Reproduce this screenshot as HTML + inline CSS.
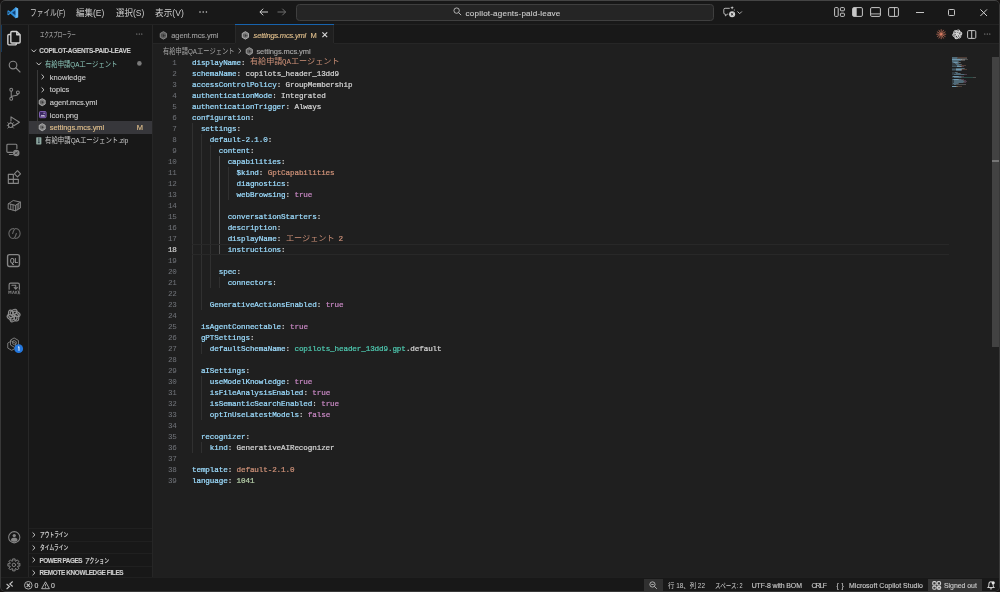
<!DOCTYPE html>
<html lang="ja"><head><meta charset="utf-8"><title>settings.mcs.yml - copilot-agents-paid-leave - Visual Studio Code</title>
<style>
html,body{margin:0;padding:0;}
body{width:1000px;height:592px;overflow:hidden;background:#171413;font-family:"Liberation Sans",sans-serif;}
#w{position:absolute;left:0;top:0;width:1000px;height:592px;background:#181818;border-radius:5px;overflow:hidden;will-change:transform;}
#w div,#w span.t,#w svg.j{position:absolute;}
.t{white-space:pre;}
.s{font-family:"Liberation Sans",sans-serif;-webkit-text-stroke:.12px;}
.m{font-family:"Liberation Mono",monospace;-webkit-text-stroke:.22px;}
svg.j{overflow:visible;}
svg.j text{white-space:pre;}
</style></head><body>
<div id="w">
<div style="left:153px;top:44px;width:847px;height:534px;background:#1f1f1f;"></div>
<div style="left:0px;top:24px;width:1000px;height:1px;background:#232323;"></div>
<div style="left:28px;top:25px;width:1px;height:553px;background:#272727;"></div>
<div style="left:152px;top:25px;width:1px;height:553px;background:#262626;"></div>
<div style="left:153px;top:43px;width:847px;height:1px;background:#262626;"></div>
<div style="left:235px;top:25px;width:98.5px;height:19px;background:#1f1f1f;"></div>
<div style="left:235px;top:24px;width:98.5px;height:1px;background:#1763ad;"></div>
<div style="left:234.5px;top:25px;width:1px;height:18px;background:#292929;"></div>
<div style="left:333px;top:25px;width:1px;height:18px;background:#292929;"></div>
<div style="left:0px;top:577px;width:1000px;height:1px;background:#202020;"></div>
<div style="left:192.0px;top:122.56px;width:1px;height:330.3px;background:#303030;"></div>
<div style="left:200.91px;top:133.57px;width:1px;height:176.16px;background:#303030;"></div>
<div style="left:200.91px;top:342.76px;width:1px;height:11.01px;background:#303030;"></div>
<div style="left:200.91px;top:375.79px;width:1px;height:44.04px;background:#303030;"></div>
<div style="left:200.91px;top:441.84999999999997px;width:1px;height:11.01px;background:#303030;"></div>
<div style="left:209.82px;top:144.57999999999998px;width:1px;height:143.13px;background:#303030;"></div>
<div style="left:218.74px;top:155.59px;width:1px;height:99.09px;background:#505050;"></div>
<div style="left:218.74px;top:276.7px;width:1px;height:11.01px;background:#303030;"></div>
<div style="left:227.65px;top:166.6px;width:1px;height:33.03px;background:#303030;"></div>
<div style="left:192px;top:244px;width:756.5px;height:1px;background:#282828;"></div>
<div style="left:192px;top:254.2px;width:756.5px;height:1px;background:#282828;"></div>
<span class="t m" style="left:192.0px;top:58px;height:11px;line-height:11px;font-size:7.6px;color:#9cdcfe;letter-spacing:-0.105px;">displayName</span>
<span class="t m" style="left:241.02px;top:58px;height:11px;line-height:11px;font-size:7.6px;color:#d4d4d4;letter-spacing:-0.105px;">:</span>
<span class="t m" style="left:245.47px;top:58px;height:11px;line-height:11px;font-size:7.6px;color:#d4d4d4;letter-spacing:-0.105px;"> </span>
<svg class="j" style="left:249.93px;top:56.45px" width="33.40" height="10.11"><text x="0" y="8.05" font-size="7.78" fill="#ce9178" font-family="&quot;Liberation Mono&quot;, &quot;Noto Sans CJK JP&quot;, monospace" textLength="32.4" lengthAdjust="spacingAndGlyphs">有給申請</text></svg>
<svg class="j" style="left:282.33px;top:56.45px" width="9.91" height="10.11"><text x="0" y="8.05" font-size="7.78" fill="#ce9178" font-family="&quot;Liberation Mono&quot;, &quot;Noto Sans CJK JP&quot;, monospace" textLength="8.91" lengthAdjust="spacingAndGlyphs">QA</text></svg>
<svg class="j" style="left:291.24px;top:56.45px" width="49.60" height="10.11"><text x="0" y="8.05" font-size="7.78" fill="#ce9178" font-family="&quot;Liberation Mono&quot;, &quot;Noto Sans CJK JP&quot;, monospace" textLength="48.6" lengthAdjust="spacingAndGlyphs">エージェント</text></svg>
<span class="t m" style="left:192.0px;top:69px;height:11px;line-height:11px;font-size:7.6px;color:#9cdcfe;letter-spacing:-0.105px;">schemaName</span>
<span class="t m" style="left:236.56px;top:69px;height:11px;line-height:11px;font-size:7.6px;color:#d4d4d4;letter-spacing:-0.105px;">:</span>
<span class="t m" style="left:241.02px;top:69px;height:11px;line-height:11px;font-size:7.6px;color:#d4d4d4;letter-spacing:-0.105px;"> copilots_header_13dd9</span>
<span class="t m" style="left:192.0px;top:80px;height:11px;line-height:11px;font-size:7.6px;color:#9cdcfe;letter-spacing:-0.105px;">accessControlPolicy</span>
<span class="t m" style="left:276.66px;top:80px;height:11px;line-height:11px;font-size:7.6px;color:#d4d4d4;letter-spacing:-0.105px;">:</span>
<span class="t m" style="left:281.12px;top:80px;height:11px;line-height:11px;font-size:7.6px;color:#d4d4d4;letter-spacing:-0.105px;"> GroupMembership</span>
<span class="t m" style="left:192.0px;top:91px;height:11px;line-height:11px;font-size:7.6px;color:#9cdcfe;letter-spacing:-0.105px;">authenticationMode</span>
<span class="t m" style="left:272.21px;top:91px;height:11px;line-height:11px;font-size:7.6px;color:#d4d4d4;letter-spacing:-0.105px;">:</span>
<span class="t m" style="left:276.66px;top:91px;height:11px;line-height:11px;font-size:7.6px;color:#d4d4d4;letter-spacing:-0.105px;"> Integrated</span>
<span class="t m" style="left:192.0px;top:102px;height:11px;line-height:11px;font-size:7.6px;color:#9cdcfe;letter-spacing:-0.105px;">authenticationTrigger</span>
<span class="t m" style="left:285.58px;top:102px;height:11px;line-height:11px;font-size:7.6px;color:#d4d4d4;letter-spacing:-0.105px;">:</span>
<span class="t m" style="left:290.03px;top:102px;height:11px;line-height:11px;font-size:7.6px;color:#d4d4d4;letter-spacing:-0.105px;"> Always</span>
<span class="t m" style="left:192.0px;top:113px;height:11px;line-height:11px;font-size:7.6px;color:#9cdcfe;letter-spacing:-0.105px;">configuration</span>
<span class="t m" style="left:249.93px;top:113px;height:11px;line-height:11px;font-size:7.6px;color:#d4d4d4;letter-spacing:-0.105px;">:</span>
<span class="t m" style="left:200.91px;top:124px;height:11px;line-height:11px;font-size:7.6px;color:#9cdcfe;letter-spacing:-0.105px;">settings</span>
<span class="t m" style="left:236.56px;top:124px;height:11px;line-height:11px;font-size:7.6px;color:#d4d4d4;letter-spacing:-0.105px;">:</span>
<span class="t m" style="left:209.82px;top:135px;height:11px;line-height:11px;font-size:7.6px;color:#9cdcfe;letter-spacing:-0.105px;">default-2.1.0</span>
<span class="t m" style="left:267.75px;top:135px;height:11px;line-height:11px;font-size:7.6px;color:#d4d4d4;letter-spacing:-0.105px;">:</span>
<span class="t m" style="left:218.74px;top:146px;height:11px;line-height:11px;font-size:7.6px;color:#9cdcfe;letter-spacing:-0.105px;">content</span>
<span class="t m" style="left:249.93px;top:146px;height:11px;line-height:11px;font-size:7.6px;color:#d4d4d4;letter-spacing:-0.105px;">:</span>
<span class="t m" style="left:227.65px;top:157px;height:11px;line-height:11px;font-size:7.6px;color:#9cdcfe;letter-spacing:-0.105px;">capabilities</span>
<span class="t m" style="left:281.12px;top:157px;height:11px;line-height:11px;font-size:7.6px;color:#d4d4d4;letter-spacing:-0.105px;">:</span>
<span class="t m" style="left:236.56px;top:168px;height:11px;line-height:11px;font-size:7.6px;color:#9cdcfe;letter-spacing:-0.105px;">$kind</span>
<span class="t m" style="left:258.84px;top:168px;height:11px;line-height:11px;font-size:7.6px;color:#d4d4d4;letter-spacing:-0.105px;">:</span>
<span class="t m" style="left:263.3px;top:168px;height:11px;line-height:11px;font-size:7.6px;color:#ce9178;letter-spacing:-0.105px;"> GptCapabilities</span>
<span class="t m" style="left:236.56px;top:179px;height:11px;line-height:11px;font-size:7.6px;color:#9cdcfe;letter-spacing:-0.105px;">diagnostics</span>
<span class="t m" style="left:285.58px;top:179px;height:11px;line-height:11px;font-size:7.6px;color:#d4d4d4;letter-spacing:-0.105px;">:</span>
<span class="t m" style="left:236.56px;top:190px;height:11px;line-height:11px;font-size:7.6px;color:#9cdcfe;letter-spacing:-0.105px;">webBrowsing</span>
<span class="t m" style="left:285.58px;top:190px;height:11px;line-height:11px;font-size:7.6px;color:#d4d4d4;letter-spacing:-0.105px;">:</span>
<span class="t m" style="left:290.03px;top:190px;height:11px;line-height:11px;font-size:7.6px;color:#c586c0;letter-spacing:-0.105px;"> true</span>
<span class="t m" style="left:227.65px;top:212px;height:11px;line-height:11px;font-size:7.6px;color:#9cdcfe;letter-spacing:-0.105px;">conversationStarters</span>
<span class="t m" style="left:316.77px;top:212px;height:11px;line-height:11px;font-size:7.6px;color:#d4d4d4;letter-spacing:-0.105px;">:</span>
<span class="t m" style="left:227.65px;top:223px;height:11px;line-height:11px;font-size:7.6px;color:#9cdcfe;letter-spacing:-0.105px;">description</span>
<span class="t m" style="left:276.66px;top:223px;height:11px;line-height:11px;font-size:7.6px;color:#d4d4d4;letter-spacing:-0.105px;">:</span>
<span class="t m" style="left:227.65px;top:234px;height:11px;line-height:11px;font-size:7.6px;color:#9cdcfe;letter-spacing:-0.105px;">displayName</span>
<span class="t m" style="left:276.66px;top:234px;height:11px;line-height:11px;font-size:7.6px;color:#d4d4d4;letter-spacing:-0.105px;">:</span>
<span class="t m" style="left:281.12px;top:234px;height:11px;line-height:11px;font-size:7.6px;color:#d4d4d4;letter-spacing:-0.105px;"> </span>
<svg class="j" style="left:285.58px;top:232.61px" width="49.60" height="10.11"><text x="0" y="8.05" font-size="7.78" fill="#ce9178" font-family="&quot;Liberation Mono&quot;, &quot;Noto Sans CJK JP&quot;, monospace" textLength="48.6" lengthAdjust="spacingAndGlyphs">エージェント</text></svg>
<span class="t m" style="left:334.18px;top:234px;height:11px;line-height:11px;font-size:7.6px;color:#ce9178;letter-spacing:-0.105px;"> 2</span>
<span class="t m" style="left:227.65px;top:245px;height:11px;line-height:11px;font-size:7.6px;color:#9cdcfe;letter-spacing:-0.105px;">instructions</span>
<span class="t m" style="left:281.12px;top:245px;height:11px;line-height:11px;font-size:7.6px;color:#d4d4d4;letter-spacing:-0.105px;">:</span>
<span class="t m" style="left:218.74px;top:267px;height:11px;line-height:11px;font-size:7.6px;color:#9cdcfe;letter-spacing:-0.105px;">spec</span>
<span class="t m" style="left:236.56px;top:267px;height:11px;line-height:11px;font-size:7.6px;color:#d4d4d4;letter-spacing:-0.105px;">:</span>
<span class="t m" style="left:227.65px;top:278px;height:11px;line-height:11px;font-size:7.6px;color:#9cdcfe;letter-spacing:-0.105px;">connectors</span>
<span class="t m" style="left:272.21px;top:278px;height:11px;line-height:11px;font-size:7.6px;color:#d4d4d4;letter-spacing:-0.105px;">:</span>
<span class="t m" style="left:209.82px;top:300px;height:11px;line-height:11px;font-size:7.6px;color:#9cdcfe;letter-spacing:-0.105px;">GenerativeActionsEnabled</span>
<span class="t m" style="left:316.77px;top:300px;height:11px;line-height:11px;font-size:7.6px;color:#d4d4d4;letter-spacing:-0.105px;">:</span>
<span class="t m" style="left:321.22px;top:300px;height:11px;line-height:11px;font-size:7.6px;color:#c586c0;letter-spacing:-0.105px;"> true</span>
<span class="t m" style="left:200.91px;top:322px;height:11px;line-height:11px;font-size:7.6px;color:#9cdcfe;letter-spacing:-0.105px;">isAgentConnectable</span>
<span class="t m" style="left:281.12px;top:322px;height:11px;line-height:11px;font-size:7.6px;color:#d4d4d4;letter-spacing:-0.105px;">:</span>
<span class="t m" style="left:285.58px;top:322px;height:11px;line-height:11px;font-size:7.6px;color:#c586c0;letter-spacing:-0.105px;"> true</span>
<span class="t m" style="left:200.91px;top:333px;height:11px;line-height:11px;font-size:7.6px;color:#9cdcfe;letter-spacing:-0.105px;">gPTSettings</span>
<span class="t m" style="left:249.93px;top:333px;height:11px;line-height:11px;font-size:7.6px;color:#d4d4d4;letter-spacing:-0.105px;">:</span>
<span class="t m" style="left:209.82px;top:344px;height:11px;line-height:11px;font-size:7.6px;color:#9cdcfe;letter-spacing:-0.105px;">defaultSchemaName</span>
<span class="t m" style="left:285.58px;top:344px;height:11px;line-height:11px;font-size:7.6px;color:#d4d4d4;letter-spacing:-0.105px;">:</span>
<span class="t m" style="left:290.03px;top:344px;height:11px;line-height:11px;font-size:7.6px;color:#4ec9b0;letter-spacing:-0.105px;"> copilots_header_13dd9.gpt</span>
<span class="t m" style="left:405.89px;top:344px;height:11px;line-height:11px;font-size:7.6px;color:#d4d4d4;letter-spacing:-0.105px;">.default</span>
<span class="t m" style="left:200.91px;top:366px;height:11px;line-height:11px;font-size:7.6px;color:#9cdcfe;letter-spacing:-0.105px;">aISettings</span>
<span class="t m" style="left:245.47px;top:366px;height:11px;line-height:11px;font-size:7.6px;color:#d4d4d4;letter-spacing:-0.105px;">:</span>
<span class="t m" style="left:209.82px;top:377px;height:11px;line-height:11px;font-size:7.6px;color:#9cdcfe;letter-spacing:-0.105px;">useModelKnowledge</span>
<span class="t m" style="left:285.58px;top:377px;height:11px;line-height:11px;font-size:7.6px;color:#d4d4d4;letter-spacing:-0.105px;">:</span>
<span class="t m" style="left:290.03px;top:377px;height:11px;line-height:11px;font-size:7.6px;color:#c586c0;letter-spacing:-0.105px;"> true</span>
<span class="t m" style="left:209.82px;top:388px;height:11px;line-height:11px;font-size:7.6px;color:#9cdcfe;letter-spacing:-0.105px;">isFileAnalysisEnabled</span>
<span class="t m" style="left:303.4px;top:388px;height:11px;line-height:11px;font-size:7.6px;color:#d4d4d4;letter-spacing:-0.105px;">:</span>
<span class="t m" style="left:307.86px;top:388px;height:11px;line-height:11px;font-size:7.6px;color:#c586c0;letter-spacing:-0.105px;"> true</span>
<span class="t m" style="left:209.82px;top:399px;height:11px;line-height:11px;font-size:7.6px;color:#9cdcfe;letter-spacing:-0.105px;">isSemanticSearchEnabled</span>
<span class="t m" style="left:312.31px;top:399px;height:11px;line-height:11px;font-size:7.6px;color:#d4d4d4;letter-spacing:-0.105px;">:</span>
<span class="t m" style="left:316.77px;top:399px;height:11px;line-height:11px;font-size:7.6px;color:#c586c0;letter-spacing:-0.105px;"> true</span>
<span class="t m" style="left:209.82px;top:410px;height:11px;line-height:11px;font-size:7.6px;color:#9cdcfe;letter-spacing:-0.105px;">optInUseLatestModels</span>
<span class="t m" style="left:298.94px;top:410px;height:11px;line-height:11px;font-size:7.6px;color:#d4d4d4;letter-spacing:-0.105px;">:</span>
<span class="t m" style="left:303.4px;top:410px;height:11px;line-height:11px;font-size:7.6px;color:#c586c0;letter-spacing:-0.105px;"> false</span>
<span class="t m" style="left:200.91px;top:432px;height:11px;line-height:11px;font-size:7.6px;color:#9cdcfe;letter-spacing:-0.105px;">recognizer</span>
<span class="t m" style="left:245.47px;top:432px;height:11px;line-height:11px;font-size:7.6px;color:#d4d4d4;letter-spacing:-0.105px;">:</span>
<span class="t m" style="left:209.82px;top:443px;height:11px;line-height:11px;font-size:7.6px;color:#9cdcfe;letter-spacing:-0.105px;">kind</span>
<span class="t m" style="left:227.65px;top:443px;height:11px;line-height:11px;font-size:7.6px;color:#d4d4d4;letter-spacing:-0.105px;">:</span>
<span class="t m" style="left:232.1px;top:443px;height:11px;line-height:11px;font-size:7.6px;color:#d4d4d4;letter-spacing:-0.105px;"> GenerativeAIRecognizer</span>
<span class="t m" style="left:192.0px;top:465px;height:11px;line-height:11px;font-size:7.6px;color:#9cdcfe;letter-spacing:-0.105px;">template</span>
<span class="t m" style="left:227.65px;top:465px;height:11px;line-height:11px;font-size:7.6px;color:#d4d4d4;letter-spacing:-0.105px;">:</span>
<span class="t m" style="left:232.1px;top:465px;height:11px;line-height:11px;font-size:7.6px;color:#ce9178;letter-spacing:-0.105px;"> default-2.1.0</span>
<span class="t m" style="left:192.0px;top:476px;height:11px;line-height:11px;font-size:7.6px;color:#9cdcfe;letter-spacing:-0.105px;">language</span>
<span class="t m" style="left:227.65px;top:476px;height:11px;line-height:11px;font-size:7.6px;color:#d4d4d4;letter-spacing:-0.105px;">:</span>
<span class="t m" style="left:232.1px;top:476px;height:11px;line-height:11px;font-size:7.6px;color:#b5cea8;letter-spacing:-0.105px;"> 1041</span>
<span class="t m" style="left:172.34px;top:58px;height:11px;line-height:11px;font-size:7.6px;color:#71747a;letter-spacing:-0.105px;-webkit-text-stroke:0;">1</span>
<span class="t m" style="left:172.34px;top:69px;height:11px;line-height:11px;font-size:7.6px;color:#71747a;letter-spacing:-0.105px;-webkit-text-stroke:0;">2</span>
<span class="t m" style="left:172.34px;top:80px;height:11px;line-height:11px;font-size:7.6px;color:#71747a;letter-spacing:-0.105px;-webkit-text-stroke:0;">3</span>
<span class="t m" style="left:172.34px;top:91px;height:11px;line-height:11px;font-size:7.6px;color:#71747a;letter-spacing:-0.105px;-webkit-text-stroke:0;">4</span>
<span class="t m" style="left:172.34px;top:102px;height:11px;line-height:11px;font-size:7.6px;color:#71747a;letter-spacing:-0.105px;-webkit-text-stroke:0;">5</span>
<span class="t m" style="left:172.34px;top:113px;height:11px;line-height:11px;font-size:7.6px;color:#71747a;letter-spacing:-0.105px;-webkit-text-stroke:0;">6</span>
<span class="t m" style="left:172.34px;top:124px;height:11px;line-height:11px;font-size:7.6px;color:#71747a;letter-spacing:-0.105px;-webkit-text-stroke:0;">7</span>
<span class="t m" style="left:172.34px;top:135px;height:11px;line-height:11px;font-size:7.6px;color:#71747a;letter-spacing:-0.105px;-webkit-text-stroke:0;">8</span>
<span class="t m" style="left:172.34px;top:146px;height:11px;line-height:11px;font-size:7.6px;color:#71747a;letter-spacing:-0.105px;-webkit-text-stroke:0;">9</span>
<span class="t m" style="left:167.89px;top:157px;height:11px;line-height:11px;font-size:7.6px;color:#71747a;letter-spacing:-0.105px;-webkit-text-stroke:0;">10</span>
<span class="t m" style="left:167.89px;top:168px;height:11px;line-height:11px;font-size:7.6px;color:#71747a;letter-spacing:-0.105px;-webkit-text-stroke:0;">11</span>
<span class="t m" style="left:167.89px;top:179px;height:11px;line-height:11px;font-size:7.6px;color:#71747a;letter-spacing:-0.105px;-webkit-text-stroke:0;">12</span>
<span class="t m" style="left:167.89px;top:190px;height:11px;line-height:11px;font-size:7.6px;color:#71747a;letter-spacing:-0.105px;-webkit-text-stroke:0;">13</span>
<span class="t m" style="left:167.89px;top:201px;height:11px;line-height:11px;font-size:7.6px;color:#71747a;letter-spacing:-0.105px;-webkit-text-stroke:0;">14</span>
<span class="t m" style="left:167.89px;top:212px;height:11px;line-height:11px;font-size:7.6px;color:#71747a;letter-spacing:-0.105px;-webkit-text-stroke:0;">15</span>
<span class="t m" style="left:167.89px;top:223px;height:11px;line-height:11px;font-size:7.6px;color:#71747a;letter-spacing:-0.105px;-webkit-text-stroke:0;">16</span>
<span class="t m" style="left:167.89px;top:234px;height:11px;line-height:11px;font-size:7.6px;color:#71747a;letter-spacing:-0.105px;-webkit-text-stroke:0;">17</span>
<span class="t m" style="left:167.89px;top:245px;height:11px;line-height:11px;font-size:7.6px;color:#cccccc;letter-spacing:-0.105px;">18</span>
<span class="t m" style="left:167.89px;top:256px;height:11px;line-height:11px;font-size:7.6px;color:#71747a;letter-spacing:-0.105px;-webkit-text-stroke:0;">19</span>
<span class="t m" style="left:167.89px;top:267px;height:11px;line-height:11px;font-size:7.6px;color:#71747a;letter-spacing:-0.105px;-webkit-text-stroke:0;">20</span>
<span class="t m" style="left:167.89px;top:278px;height:11px;line-height:11px;font-size:7.6px;color:#71747a;letter-spacing:-0.105px;-webkit-text-stroke:0;">21</span>
<span class="t m" style="left:167.89px;top:289px;height:11px;line-height:11px;font-size:7.6px;color:#71747a;letter-spacing:-0.105px;-webkit-text-stroke:0;">22</span>
<span class="t m" style="left:167.89px;top:300px;height:11px;line-height:11px;font-size:7.6px;color:#71747a;letter-spacing:-0.105px;-webkit-text-stroke:0;">23</span>
<span class="t m" style="left:167.89px;top:311px;height:11px;line-height:11px;font-size:7.6px;color:#71747a;letter-spacing:-0.105px;-webkit-text-stroke:0;">24</span>
<span class="t m" style="left:167.89px;top:322px;height:11px;line-height:11px;font-size:7.6px;color:#71747a;letter-spacing:-0.105px;-webkit-text-stroke:0;">25</span>
<span class="t m" style="left:167.89px;top:333px;height:11px;line-height:11px;font-size:7.6px;color:#71747a;letter-spacing:-0.105px;-webkit-text-stroke:0;">26</span>
<span class="t m" style="left:167.89px;top:344px;height:11px;line-height:11px;font-size:7.6px;color:#71747a;letter-spacing:-0.105px;-webkit-text-stroke:0;">27</span>
<span class="t m" style="left:167.89px;top:355px;height:11px;line-height:11px;font-size:7.6px;color:#71747a;letter-spacing:-0.105px;-webkit-text-stroke:0;">28</span>
<span class="t m" style="left:167.89px;top:366px;height:11px;line-height:11px;font-size:7.6px;color:#71747a;letter-spacing:-0.105px;-webkit-text-stroke:0;">29</span>
<span class="t m" style="left:167.89px;top:377px;height:11px;line-height:11px;font-size:7.6px;color:#71747a;letter-spacing:-0.105px;-webkit-text-stroke:0;">30</span>
<span class="t m" style="left:167.89px;top:388px;height:11px;line-height:11px;font-size:7.6px;color:#71747a;letter-spacing:-0.105px;-webkit-text-stroke:0;">31</span>
<span class="t m" style="left:167.89px;top:399px;height:11px;line-height:11px;font-size:7.6px;color:#71747a;letter-spacing:-0.105px;-webkit-text-stroke:0;">32</span>
<span class="t m" style="left:167.89px;top:410px;height:11px;line-height:11px;font-size:7.6px;color:#71747a;letter-spacing:-0.105px;-webkit-text-stroke:0;">33</span>
<span class="t m" style="left:167.89px;top:421px;height:11px;line-height:11px;font-size:7.6px;color:#71747a;letter-spacing:-0.105px;-webkit-text-stroke:0;">34</span>
<span class="t m" style="left:167.89px;top:432px;height:11px;line-height:11px;font-size:7.6px;color:#71747a;letter-spacing:-0.105px;-webkit-text-stroke:0;">35</span>
<span class="t m" style="left:167.89px;top:443px;height:11px;line-height:11px;font-size:7.6px;color:#71747a;letter-spacing:-0.105px;-webkit-text-stroke:0;">36</span>
<span class="t m" style="left:167.89px;top:454px;height:11px;line-height:11px;font-size:7.6px;color:#71747a;letter-spacing:-0.105px;-webkit-text-stroke:0;">37</span>
<span class="t m" style="left:167.89px;top:465px;height:11px;line-height:11px;font-size:7.6px;color:#71747a;letter-spacing:-0.105px;-webkit-text-stroke:0;">38</span>
<span class="t m" style="left:167.89px;top:476px;height:11px;line-height:11px;font-size:7.6px;color:#71747a;letter-spacing:-0.105px;-webkit-text-stroke:0;">39</span>
<svg class="j" style="left:6.5px;top:6.6px;" width="11.6" height="11.6" viewBox="0 0 100 100"><path fill="#0b3f7a" d="M72 26 L40 50 L72 74z"/><path fill="#2f8fdc" d="M74 2 L30 42 L12 28 L4 32 V68 L12 72 L30 58 L74 98 L96 88 V12z M74 28 V72 L44 50z M12 40 L22 50 L12 60z"/><path fill="#62b4f2" d="M74 2 L96 12 V88 L74 98z"/></svg>
<svg class="j" style="left:30px;top:6.65px" width="36.30" height="11.31"><text x="0" y="9" font-size="8.7" fill="#cccccc" font-family="&quot;Liberation Sans&quot;, &quot;Noto Sans CJK JP&quot;, sans-serif" textLength="35.3" lengthAdjust="spacingAndGlyphs">ファイル(F)</text></svg>
<svg class="j" style="left:76.3px;top:6.65px" width="29.30" height="11.31"><text x="0" y="9" font-size="8.7" fill="#cccccc" font-family="&quot;Liberation Sans&quot;, &quot;Noto Sans CJK JP&quot;, sans-serif" textLength="28.3" lengthAdjust="spacingAndGlyphs">編集(E)</text></svg>
<svg class="j" style="left:115.7px;top:6.65px" width="29.30" height="11.31"><text x="0" y="9" font-size="8.7" fill="#cccccc" font-family="&quot;Liberation Sans&quot;, &quot;Noto Sans CJK JP&quot;, sans-serif" textLength="28.3" lengthAdjust="spacingAndGlyphs">選択(S)</text></svg>
<svg class="j" style="left:155px;top:6.65px" width="29.80" height="11.31"><text x="0" y="9" font-size="8.7" fill="#cccccc" font-family="&quot;Liberation Sans&quot;, &quot;Noto Sans CJK JP&quot;, sans-serif" textLength="28.8" lengthAdjust="spacingAndGlyphs">表示(V)</text></svg>
<svg class="j" style="left:199px;top:11px;" width="9" height="2" viewBox="0 0 9 2"><circle cx="1" cy="1" r=".8" fill="#ccc"/><circle cx="4.2" cy="1" r=".8" fill="#ccc"/><circle cx="7.4" cy="1" r=".8" fill="#ccc"/></svg>
<svg class="j" style="left:259px;top:8px;" width="9.5" height="8" viewBox="0 0 9.5 8"><path d="M4.2 .7 L.9 4 L4.2 7.3 M.9 4 H9" fill="none" stroke="#ccc" stroke-width="1"/></svg>
<svg class="j" style="left:277px;top:8px;" width="9.5" height="8" viewBox="0 0 9.5 8"><path d="M5.3 .7 L8.6 4 L5.3 7.3 M8.6 4 H.5" fill="none" stroke="#6f6f6f" stroke-width="1"/></svg>
<div style="left:296px;top:3.7px;width:418px;height:17.2px;background:#252525;border:1px solid #3f3f3f;border-radius:3.5px;box-sizing:border-box;"></div>
<svg class="j" style="left:452.6px;top:7.3px;" width="8.8" height="8.8" viewBox="0 0 16 16"><circle cx="6.6" cy="6.6" r="4.9" fill="none" stroke="#ccc" stroke-width="1.5"/><path d="M10.2 10.2 L14.8 14.8" stroke="#ccc" stroke-width="1.6"/></svg>
<span class="t s" style="left:465.6px;top:8px;height:12px;line-height:12px;font-size:8.1px;color:#cccccc;letter-spacing:0.180px;">copilot-agents-paid-leave</span>
<svg class="j" style="left:722.5px;top:6.2px;" width="13" height="12" viewBox="0 0 26 24"><path d="M13.5 4.600 H4.200 a2.600 2.600 0 0 0 -2.600 2.600 v6.600 a2.600 2.600 0 0 0 2.600 2.600 h.600 v3.400 L8.600 16.400 H10.500" fill="none" stroke="#c8c8c8" stroke-width="1.800" stroke-linejoin="round"/><circle cx="18.200" cy="16.600" r="6" fill="#d4d4d4"/><path d="M15.900 14.300 l4.600 4.600 m0 -4.600 l-4.600 4.600" stroke="#181818" stroke-width="1.700"/><path d="M18.200 -.2 l1 2.700 2.700 1 -2.700 1 -1 2.700 -1 -2.700 -2.700 -1 2.700 -1z" fill="#d4d4d4"/><path d="M22.600 6.300 l.5 1.300 1.300 .5 -1.300 .5 -.5 1.300 -.5 -1.300 -1.300 -.5 1.300 -.5z" fill="#c4c4c4"/></svg>
<svg class="j" style="left:737px;top:10.5px;" width="5.4" height="3.4" viewBox="0 0 5.4 3.4"><path d="M.5 .5 L2.700 2.700 L4.900 .5" fill="none" stroke="#bbb" stroke-width=".95"/></svg>
<svg class="j" style="left:834.2px;top:7.4px;" width="11" height="10" viewBox="0 0 11 10"><rect x=".6" y=".6" width="3.6" height="8.8" rx=".8" fill="none" stroke="#c8c8c8" stroke-width="1"/><rect x="6.4" y=".6" width="4" height="3.2" rx=".8" fill="none" stroke="#c8c8c8" stroke-width="1"/><rect x="6.4" y="6.2" width="4" height="3.2" rx=".8" fill="none" stroke="#c8c8c8" stroke-width="1"/></svg>
<svg class="j" style="left:852.2px;top:7.4px;" width="11" height="10" viewBox="0 0 11 10"><rect x=".6" y=".6" width="9.8" height="8.8" rx="1.2" fill="none" stroke="#c8c8c8" stroke-width="1"/><path d="M1 1 H4.700 V9 H1 Z" fill="#c8c8c8"/></svg>
<svg class="j" style="left:870.2px;top:7.4px;" width="11" height="10" viewBox="0 0 11 10"><rect x=".6" y=".6" width="9.8" height="8.8" rx="1.2" fill="none" stroke="#c8c8c8" stroke-width="1"/><path d="M.6 6.900 H10.400" stroke="#c8c8c8" stroke-width=".9"/></svg>
<svg class="j" style="left:888.2px;top:7.4px;" width="11" height="10" viewBox="0 0 11 10"><rect x=".6" y=".6" width="9.8" height="8.8" rx="1.2" fill="none" stroke="#c8c8c8" stroke-width="1"/><path d="M6.500 .6 V9.400" stroke="#c8c8c8" stroke-width=".9"/></svg>
<div style="left:916px;top:12px;width:8px;height:1px;background:#c4c4c4;"></div>
<div style="left:947.8px;top:9px;width:7px;height:6.6px;background:transparent;border:1px solid #c4c4c4;border-radius:1.3px;box-sizing:border-box;"></div>
<svg class="j" style="left:979.6px;top:8.8px;" width="7.4" height="7.4" viewBox="0 0 7.4 7.4"><path d="M.4 .4 L7 7 M7 .4 L.4 7" stroke="#d0d0d0" stroke-width="1"/></svg>
<div style="left:1px;top:25px;width:1.2px;height:27px;background:#153a5e;"></div>
<svg class="j" style="left:5.7px;top:30.2px;" width="15.6" height="15.6" viewBox="1.5 1.5 21 21"><path d="M9.5 3.5 h6.5 l4.5 4.5 v9.5 a1.5 1.5 0 0 1 -1.5 1.5 h-9.5 a1.5 1.5 0 0 1 -1.5 -1.5 v-12.5 a1.5 1.5 0 0 1 1.5 -1.5z M16 3.5 v4.5 h4.5 M8 7.5 h-2.5 a1.5 1.5 0 0 0 -1.5 1.5 v11 a1.5 1.5 0 0 0 1.5 1.5 h8.5 a1.5 1.5 0 0 0 1.5 -1.5 v-1" fill="none" stroke-linecap="round" stroke-linejoin="round" stroke="#d0d0d0" stroke-width="1.9"/></svg>
<svg class="j" style="left:6.75px;top:58.75px;" width="14.5" height="14.5" viewBox="0 0 24 24"><circle cx="10" cy="10" r="6.3" fill="none" stroke-linecap="round" stroke-linejoin="round" stroke="#868686" stroke-width="1.9"/><path d="M14.8 14.8 L21.5 21.5" fill="none" stroke-linecap="round" stroke-linejoin="round" stroke="#868686" stroke-width="1.9"/></svg>
<svg class="j" style="left:6.75px;top:86.75px;" width="14.5" height="14.5" viewBox="0 0 24 24"><circle cx="7" cy="4.6" r="2.4" fill="none" stroke-linecap="round" stroke-linejoin="round" stroke="#868686" stroke-width="1.7"/><circle cx="7" cy="19.4" r="2.4" fill="none" stroke-linecap="round" stroke-linejoin="round" stroke="#868686" stroke-width="1.7"/><circle cx="18" cy="9" r="2.4" fill="none" stroke-linecap="round" stroke-linejoin="round" stroke="#868686" stroke-width="1.7"/><path d="M7 7 V17 M18 11.4 c0 4.6 -11 2 -11 5.6" fill="none" stroke-linecap="round" stroke-linejoin="round" stroke="#868686" stroke-width="1.7"/></svg>
<svg class="j" style="left:5.7px;top:115.3px;" width="15" height="15" viewBox="0 0 24 24"><path d="M8 9 V3 L21.5 11.5 L12.5 17.2" fill="none" stroke-linecap="round" stroke-linejoin="round" stroke="#868686" stroke-width="1.8"/><circle cx="7.5" cy="16.5" r="3.6" fill="none" stroke-linecap="round" stroke-linejoin="round" stroke="#868686" stroke-width="1.7"/><path d="M7.5 12.9 v-1.6 M2 16.5 h2 M11 16.5 h2 M3 12.2 l1.6 1.6 M12 12.2 l-1.6 1.6 M3 21 l1.7 -1.8 M12 21 l-1.7 -1.8" fill="none" stroke-linecap="round" stroke-linejoin="round" stroke="#868686" stroke-width="1.5"/></svg>
<svg class="j" style="left:5.1px;top:142.0px;" width="15" height="15" viewBox="0 0 24 24"><path d="M12 16.5 H4.5 a1.5 1.5 0 0 1 -1.5 -1.5 V5 a1.5 1.5 0 0 1 1.5 -1.5 h13 a1.5 1.5 0 0 1 1.5 1.5 v5.5 M7 20 h5" fill="none" stroke-linecap="round" stroke-linejoin="round" stroke="#868686" stroke-width="1.8"/><circle cx="18" cy="17.5" r="5.2" fill="#868686"/><path d="M16.3 15.6 l1.6 1.6 -2.4 2.2 M19.8 19.4 l-1.7 -1.6 2.4 -2.2" fill="none" stroke="#181818" stroke-width="1.1"/></svg>
<svg class="j" style="left:5.8px;top:168.9px;" width="16" height="16" viewBox="0 0 24 24"><path d="M3.5 8 h7.5 v7.5 h7.5 v6 h-15z M11 15.5 H3.5 M11 15.5 v6" fill="none" stroke-linecap="round" stroke-linejoin="round" stroke="#868686" stroke-width="1.7"/><path d="M17.2 2.6 l4.6 4.6 -4.6 4.6 -4.6 -4.6z" fill="none" stroke-linecap="round" stroke-linejoin="round" stroke="#868686" stroke-width="1.6"/></svg>
<svg class="j" style="left:6.5px;top:197.7px;" width="15" height="15" viewBox="0 0 24 24"><path d="M2.5 9 L10 4 L21.5 6.5 V16 L13.5 20.5 L2.5 17.5z M2.5 9 L13.5 11.8 L21.5 6.5 M13.5 11.8 V20.5 M6 10 v8.2 M9.7 11 v8.3 M16.2 10.2 v8.8 M18.9 8.4 v9" fill="none" stroke-linecap="round" stroke-linejoin="round" stroke="#868686" stroke-width="1.5"/></svg>
<svg class="j" style="left:6.5px;top:225.5px;" width="15" height="15" viewBox="0 0 24 24"><path d="M10.5 4 C5 4 3 9 3 12 s2 8 7 8 c3.5 0 3.5 -5 5 -8 M13.5 20 c5.500 0 7.500 -5 7.500 -8 s-2 -8 -7 -8 c-3.500 0 -3.500 5 -5 8" fill="none" stroke-linecap="round" stroke-linejoin="round" stroke="#666" stroke-width="1.8"/></svg>
<svg class="j" style="left:6.1px;top:253.2px;" width="15" height="15" viewBox="0 0 24 24"><rect x="2.5" y="2.5" width="19" height="19" rx="3" fill="none" stroke-linecap="round" stroke-linejoin="round" stroke="#868686" stroke-width="2.200"/></svg>
<svg class="j" style="left:9.6px;top:256.34px" width="9.20" height="8.71"><text x="0" y="6.93" font-size="6.7" font-weight="bold" fill="#a0a0a0" font-family="&quot;Liberation Sans&quot;, sans-serif" textLength="8.2" lengthAdjust="spacingAndGlyphs">QL</text></svg>
<svg class="j" style="left:6.55px;top:281.05px;" width="14.5" height="14.5" viewBox="0 0 24 24"><path d="M3.500 13.500 V6 a2.500 2.500 0 0 1 2.500 -2.500 h12 a2.500 2.500 0 0 1 2.500 2.500 v7.500" fill="none" stroke-linecap="round" stroke-linejoin="round" stroke="#868686" stroke-width="1.900"/><path d="M8 7.200 h6.500 v6 M11.800 10.500 l2.700 2.900 2.700 -2.900" fill="none" stroke-linecap="round" stroke-linejoin="round" stroke="#868686" stroke-width="1.700"/><path d="M3 21.300 v-5 l1.800 2.800 1.800 -2.800 v5 M9 21.300 l1.700 -5 1.700 5 M14.400 16.300 v5 M17.300 16.300 l-2.700 2.600 2.900 2.400 M21.800 16.500 h-2.800 v4.600 h2.800 M19 18.800 h2.300" fill="none" stroke="#868686" stroke-width="1.300"/></svg>
<svg class="j" style="left:6.4px;top:308.2px;" width="15.2" height="15.2" viewBox="0 0 24 24"><g transform="rotate(0 12 12)"><ellipse cx="12" cy="6.600" rx="5.900" ry="3.500" transform="rotate(-32 12 6.600)" fill="none" stroke="#8e8e8e" stroke-width="1.75"/></g><g transform="rotate(60 12 12)"><ellipse cx="12" cy="6.600" rx="5.900" ry="3.500" transform="rotate(-32 12 6.600)" fill="none" stroke="#8e8e8e" stroke-width="1.75"/></g><g transform="rotate(120 12 12)"><ellipse cx="12" cy="6.600" rx="5.900" ry="3.500" transform="rotate(-32 12 6.600)" fill="none" stroke="#8e8e8e" stroke-width="1.75"/></g><g transform="rotate(180 12 12)"><ellipse cx="12" cy="6.600" rx="5.900" ry="3.500" transform="rotate(-32 12 6.600)" fill="none" stroke="#8e8e8e" stroke-width="1.75"/></g><g transform="rotate(240 12 12)"><ellipse cx="12" cy="6.600" rx="5.900" ry="3.500" transform="rotate(-32 12 6.600)" fill="none" stroke="#8e8e8e" stroke-width="1.75"/></g><g transform="rotate(300 12 12)"><ellipse cx="12" cy="6.600" rx="5.900" ry="3.500" transform="rotate(-32 12 6.600)" fill="none" stroke="#8e8e8e" stroke-width="1.75"/></g></svg>
<svg class="j" style="left:6.35px;top:336.95px;" width="14.5" height="14.5" viewBox="0 0 24 24"><path d="M14.00 1.90 L20.58 5.70 L20.58 13.30 L14.00 17.10 L7.42 13.30 L7.42 5.70z M9.50 6.90 L16.08 10.70 L16.08 18.30 L9.50 22.10 L2.92 18.30 L2.92 10.70z M14.00 6.10 L16.94 7.80 L16.94 11.20 L14.00 12.90 L11.06 11.20 L11.06 7.80z" fill="none" stroke-linecap="round" stroke-linejoin="round" stroke="#858585" stroke-width="1.500"/></svg>
<svg class="j" style="left:13.9px;top:343.7px;" width="9.4" height="9.4" viewBox="0 0 9.4 9.4"><circle cx="4.7" cy="4.7" r="4.4" fill="#2477dd"/><path d="M4 3.400 L5 2.700 V6.800" fill="none" stroke="#fff" stroke-width=".9"/></svg>
<svg class="j" style="left:6.75px;top:529.75px;" width="14.5" height="14.5" viewBox="0 0 24 24"><circle cx="12" cy="12" r="9.300" fill="none" stroke-linecap="round" stroke-linejoin="round" stroke="#868686" stroke-width="1.700"/><circle cx="12" cy="9.300" r="2.700" fill="#868686"/><path d="M6.500 17 c0 -3.200 2.500 -4 5.500 -4 s5.500 .800 5.500 4 c-1.500 1.700 -3.500 2.500 -5.500 2.500 s-4 -.800 -5.500 -2.500z" fill="#868686"/></svg>
<svg class="j" style="left:7.1px;top:557.7px;" width="13.8" height="13.8" viewBox="0 0 24 24"><path d="M22.37 9.80 L22.37 14.20 L19.07 13.83 L18.29 15.71 L20.89 17.77 L17.77 20.89 L15.71 18.29 L13.83 19.07 L14.20 22.37 L9.80 22.37 L10.17 19.07 L8.29 18.29 L6.23 20.89 L3.11 17.77 L5.71 15.71 L4.93 13.83 L1.63 14.20 L1.63 9.80 L4.93 10.17 L5.71 8.29 L3.11 6.23 L6.23 3.11 L8.29 5.71 L10.17 4.93 L9.80 1.63 L14.20 1.63 L13.83 4.93 L15.71 5.71 L17.77 3.11 L20.89 6.23 L18.29 8.29 L19.07 10.17Z" fill="none" stroke-linecap="round" stroke-linejoin="round" stroke="#868686" stroke-width="1.700"/><circle cx="12" cy="12" r="3" fill="none" stroke-linecap="round" stroke-linejoin="round" stroke="#868686" stroke-width="1.600"/></svg>
<svg class="j" style="left:39.8px;top:30.07px" width="36.70" height="8.45"><text x="0" y="6.73" font-size="6.5" fill="#c4c4c4" font-family="&quot;Liberation Sans&quot;, &quot;Noto Sans CJK JP&quot;, sans-serif" textLength="35.7" lengthAdjust="spacingAndGlyphs">エクスプローラー</text></svg>
<svg class="j" style="left:136.2px;top:33.3px;" width="7" height="2" viewBox="0 0 7 2"><circle cx=".8" cy="1" r=".62" fill="#a8a8a8"/><circle cx="3.3" cy="1" r=".62" fill="#a8a8a8"/><circle cx="5.8" cy="1" r=".62" fill="#a8a8a8"/></svg>
<svg class="j" style="left:31.0px;top:48.9px;" width="5.6" height="3.8" viewBox="0 0 5.6 3.8"><path d="M.5 .6 L2.8 3 L5.1 .6" fill="none" stroke="#c5c5c5" stroke-width="1"/></svg>
<span class="t s" style="left:39.3px;top:45px;height:12px;line-height:12px;font-size:6.4px;color:#cccccc;letter-spacing:-0.217px;font-weight:bold;">COPILOT-AGENTS-PAID-LEAVE</span>
<div style="left:29px;top:121.3px;width:123px;height:12.7px;background:#37373b;"></div>
<div style="left:37px;top:70px;width:1px;height:64px;background:#3a3a3a;"></div>
<svg class="j" style="left:35.8px;top:62.0px;" width="5.6" height="3.8" viewBox="0 0 5.6 3.8"><path d="M.5 .6 L2.8 3 L5.1 .6" fill="none" stroke="#c5c5c5" stroke-width="1"/></svg>
<svg class="j" style="left:45.3px;top:59.11px" width="73.40" height="9.79"><text x="0" y="7.79" font-size="7.53" fill="#8cc6ba" font-family="&quot;Liberation Sans&quot;, &quot;Noto Sans CJK JP&quot;, sans-serif" textLength="72.4" lengthAdjust="spacingAndGlyphs">有給申請QAエージェント</text></svg>
<svg class="j" style="left:137.4px;top:61.0px;" width="4.8" height="4.8" viewBox="0 0 4.8 4.8"><circle cx="2.4" cy="2.4" r="2.3" fill="#7a7a7a"/></svg>
<svg class="j" style="left:41.3px;top:73.92px;" width="3.8" height="5.6" viewBox="0 0 3.8 5.6"><path d="M.6 .5 L3 2.800 L.6 5.100" fill="none" stroke="#c5c5c5" stroke-width="1"/></svg>
<span class="t s" style="left:49.8px;top:72px;height:12px;line-height:12px;font-size:7.53px;color:#cccccc;letter-spacing:0.022px;">knowledge</span>
<svg class="j" style="left:41.3px;top:86.64px;" width="3.8" height="5.6" viewBox="0 0 3.8 5.6"><path d="M.6 .5 L3 2.800 L.6 5.100" fill="none" stroke="#c5c5c5" stroke-width="1"/></svg>
<span class="t s" style="left:49.8px;top:84px;height:12px;line-height:12px;font-size:7.53px;color:#cccccc;letter-spacing:-0.028px;">topics</span>
<svg class="j" style="left:38.0px;top:97.96px;" width="8.4" height="8.4" viewBox="0 0 24 24"><path d="M12 1.800 L20.600 6.700 V17.300 L12 22.200 L3.400 17.300 V6.700z" fill="#b8b8b8" fill-opacity=".6" stroke="#b8b8b8" stroke-width="2.400" stroke-linejoin="round"/><path d="M10.300 8 L15 10.600 V14.200 L10.300 16.600z" fill="#1c1c1c" fill-opacity=".7"/><path d="M15.200 12.300 h3.200 M7 8.500 v7" stroke="#1c1c1c" stroke-opacity=".5" stroke-width="1.600"/></svg>
<span class="t s" style="left:49.8px;top:97px;height:12px;line-height:12px;font-size:7.53px;color:#cccccc;letter-spacing:-0.095px;">agent.mcs.yml</span>
<svg class="j" style="left:38.6px;top:111.28px;" width="7.6" height="7.2" viewBox="0 0 7.6 7.2"><rect x=".5" y=".5" width="6.600" height="6.200" rx=".9" fill="#3a2763" stroke="#8a68c2" stroke-width=".9"/><path d="M1.300 5.400 L2.900 3.700 L3.900 4.600 L5 3.800 L6.300 5.400z" fill="#d9d0ec"/><circle cx="5.100" cy="2.200" r=".6" fill="#d9d0ec"/></svg>
<span class="t s" style="left:49.8px;top:110px;height:12px;line-height:12px;font-size:7.53px;color:#cccccc;letter-spacing:-0.009px;">icon.png</span>
<svg class="j" style="left:38.0px;top:123.4px;" width="8.4" height="8.4" viewBox="0 0 24 24"><path d="M12 1.800 L20.600 6.700 V17.300 L12 22.200 L3.400 17.300 V6.700z" fill="#b8b8b8" fill-opacity=".6" stroke="#b8b8b8" stroke-width="2.400" stroke-linejoin="round"/><path d="M10.300 8 L15 10.600 V14.200 L10.300 16.600z" fill="#1c1c1c" fill-opacity=".7"/><path d="M15.200 12.300 h3.200 M7 8.500 v7" stroke="#1c1c1c" stroke-opacity=".5" stroke-width="1.600"/></svg>
<span class="t s" style="left:49.8px;top:122px;height:12px;line-height:12px;font-size:7.53px;color:#e2c08d;letter-spacing:-0.078px;">settings.mcs.yml</span>
<span class="t s" style="left:136.8px;top:122px;height:12px;line-height:12px;font-size:7.53px;color:#e2c08d;">M</span>
<svg class="j" style="left:36.3px;top:136.51999999999998px;" width="5.6" height="7.6" viewBox="0 0 5.6 7.600"><rect x=".2" y=".2" width="5.200" height="7.200" rx=".6" fill="#8ea8a0"/><path d="M2.800 .6 v3.400 M2 1.200 h1.600 M2 2.400 h1.600 M2 3.600 h1.600" stroke="#37474f" stroke-width=".5"/><rect x="1.900" y="4.400" width="1.800" height="1.800" fill="#37474f"/></svg>
<svg class="j" style="left:45.3px;top:135.43px" width="84.20" height="9.79"><text x="0" y="7.79" font-size="7.53" fill="#cccccc" font-family="&quot;Liberation Sans&quot;, &quot;Noto Sans CJK JP&quot;, sans-serif" textLength="83.2" lengthAdjust="spacingAndGlyphs">有給申請QAエージェント.zip</text></svg>
<div style="left:29px;top:528px;width:123px;height:1px;background:#202020;"></div>
<div style="left:29px;top:540.7px;width:123px;height:1px;background:#202020;"></div>
<div style="left:29px;top:553.4px;width:123px;height:1px;background:#202020;"></div>
<div style="left:29px;top:566.1px;width:123px;height:1px;background:#202020;"></div>
<svg class="j" style="left:32.2px;top:531.8000000000001px;" width="3.8" height="5.6" viewBox="0 0 3.8 5.6"><path d="M.6 .5 L3 2.800 L.6 5.100" fill="none" stroke="#c5c5c5" stroke-width="1"/></svg>
<svg class="j" style="left:32.2px;top:544.5px;" width="3.8" height="5.6" viewBox="0 0 3.8 5.6"><path d="M.6 .5 L3 2.800 L.6 5.100" fill="none" stroke="#c5c5c5" stroke-width="1"/></svg>
<svg class="j" style="left:32.2px;top:557.2px;" width="3.8" height="5.6" viewBox="0 0 3.8 5.6"><path d="M.6 .5 L3 2.800 L.6 5.100" fill="none" stroke="#c5c5c5" stroke-width="1"/></svg>
<svg class="j" style="left:32.2px;top:569.8000000000001px;" width="3.8" height="5.6" viewBox="0 0 3.8 5.6"><path d="M.6 .5 L3 2.800 L.6 5.100" fill="none" stroke="#c5c5c5" stroke-width="1"/></svg>
<svg class="j" style="left:39.6px;top:530.31px" width="29.30" height="8.58"><text x="0" y="6.83" font-size="6.6" font-weight="bold" fill="#cccccc" font-family="&quot;Liberation Sans&quot;, &quot;Noto Sans CJK JP&quot;, sans-serif" textLength="28.3" lengthAdjust="spacingAndGlyphs">アウトライン</text></svg>
<svg class="j" style="left:39.6px;top:543.01px" width="29.30" height="8.58"><text x="0" y="6.83" font-size="6.6" font-weight="bold" fill="#cccccc" font-family="&quot;Liberation Sans&quot;, &quot;Noto Sans CJK JP&quot;, sans-serif" textLength="28.3" lengthAdjust="spacingAndGlyphs">タイムライン</text></svg>
<span class="t s" style="left:39.6px;top:555px;height:12px;line-height:12px;font-size:6.4px;color:#cccccc;letter-spacing:-0.499px;font-weight:bold;">POWER PAGES</span>
<svg class="j" style="left:85px;top:555.71px" width="25.00" height="8.58"><text x="0" y="6.83" font-size="6.6" font-weight="bold" fill="#cccccc" font-family="&quot;Liberation Sans&quot;, &quot;Noto Sans CJK JP&quot;, sans-serif" textLength="24" lengthAdjust="spacingAndGlyphs">アクション</text></svg>
<span class="t s" style="left:39.6px;top:567px;height:12px;line-height:12px;font-size:6.4px;color:#cccccc;letter-spacing:-0.345px;font-weight:bold;">REMOTE KNOWLEDGE FILES</span>
<svg class="j" style="left:159.4px;top:30.9px;" width="8.8" height="8.8" viewBox="0 0 24 24"><path d="M12 1.800 L20.600 6.700 V17.300 L12 22.200 L3.400 17.300 V6.700z" fill="#8d8d8d" fill-opacity=".6" stroke="#8d8d8d" stroke-width="2.400" stroke-linejoin="round"/><path d="M10.300 8 L15 10.600 V14.200 L10.300 16.600z" fill="#1c1c1c" fill-opacity=".7"/><path d="M15.200 12.300 h3.200 M7 8.500 v7" stroke="#1c1c1c" stroke-opacity=".5" stroke-width="1.600"/></svg>
<span class="t s" style="left:171.3px;top:30px;height:12px;line-height:12px;font-size:7.53px;color:#9d9d9d;letter-spacing:-0.111px;">agent.mcs.yml</span>
<svg class="j" style="left:241.2px;top:30.9px;" width="8.8" height="8.8" viewBox="0 0 24 24"><path d="M12 1.800 L20.600 6.700 V17.300 L12 22.200 L3.400 17.300 V6.700z" fill="#bdbdbd" fill-opacity=".6" stroke="#bdbdbd" stroke-width="2.400" stroke-linejoin="round"/><path d="M10.300 8 L15 10.600 V14.200 L10.300 16.600z" fill="#1c1c1c" fill-opacity=".7"/><path d="M15.200 12.300 h3.200 M7 8.500 v7" stroke="#1c1c1c" stroke-opacity=".5" stroke-width="1.600"/></svg>
<span class="t s" style="left:253.6px;top:30px;height:12px;line-height:12px;font-size:7.53px;color:#e2c08d;letter-spacing:-0.191px;font-style:italic;">settings.mcs.yml</span>
<span class="t s" style="left:310.6px;top:30px;height:12px;line-height:12px;font-size:7.53px;color:#e2c08d;">M</span>
<svg class="j" style="left:322px;top:32px;" width="5.6" height="5.6" viewBox="0 0 5.6 5.600"><path d="M.4 .4 L5.200 5.200 M5.200 .4 L.4 5.200" stroke="#dcdcdc" stroke-width="1.100"/></svg>
<svg class="j" style="left:936.4px;top:29.4px;" width="10.4" height="10.4" viewBox="0 0 24 24"><path d="M12 12 L22.50 12.00" stroke="#dd8065" stroke-width="1.700" stroke-linecap="round" opacity=".9"/><path d="M12 12 L21.09 17.25" stroke="#dd8065" stroke-width="1.700" stroke-linecap="round" opacity=".9"/><path d="M12 12 L17.25 21.09" stroke="#dd8065" stroke-width="1.700" stroke-linecap="round" opacity=".9"/><path d="M12 12 L12.00 22.50" stroke="#dd8065" stroke-width="1.700" stroke-linecap="round" opacity=".9"/><path d="M12 12 L6.75 21.09" stroke="#dd8065" stroke-width="1.700" stroke-linecap="round" opacity=".9"/><path d="M12 12 L2.91 17.25" stroke="#dd8065" stroke-width="1.700" stroke-linecap="round" opacity=".9"/><path d="M12 12 L1.50 12.00" stroke="#dd8065" stroke-width="1.700" stroke-linecap="round" opacity=".9"/><path d="M12 12 L2.91 6.75" stroke="#dd8065" stroke-width="1.700" stroke-linecap="round" opacity=".9"/><path d="M12 12 L6.75 2.91" stroke="#dd8065" stroke-width="1.700" stroke-linecap="round" opacity=".9"/><path d="M12 12 L12.00 1.50" stroke="#dd8065" stroke-width="1.700" stroke-linecap="round" opacity=".9"/><path d="M12 12 L17.25 2.91" stroke="#dd8065" stroke-width="1.700" stroke-linecap="round" opacity=".9"/><path d="M12 12 L21.09 6.75" stroke="#dd8065" stroke-width="1.700" stroke-linecap="round" opacity=".9"/></svg>
<svg class="j" style="left:951.6px;top:29.2px;" width="10.6" height="10.6" viewBox="0 0 24 24"><g transform="rotate(0 12 12)"><ellipse cx="12" cy="6.600" rx="5.900" ry="3.500" transform="rotate(-32 12 6.600)" fill="none" stroke="#dcdcdc" stroke-width="2.1"/></g><g transform="rotate(60 12 12)"><ellipse cx="12" cy="6.600" rx="5.900" ry="3.500" transform="rotate(-32 12 6.600)" fill="none" stroke="#dcdcdc" stroke-width="2.1"/></g><g transform="rotate(120 12 12)"><ellipse cx="12" cy="6.600" rx="5.900" ry="3.500" transform="rotate(-32 12 6.600)" fill="none" stroke="#dcdcdc" stroke-width="2.1"/></g><g transform="rotate(180 12 12)"><ellipse cx="12" cy="6.600" rx="5.900" ry="3.500" transform="rotate(-32 12 6.600)" fill="none" stroke="#dcdcdc" stroke-width="2.1"/></g><g transform="rotate(240 12 12)"><ellipse cx="12" cy="6.600" rx="5.900" ry="3.500" transform="rotate(-32 12 6.600)" fill="none" stroke="#dcdcdc" stroke-width="2.1"/></g><g transform="rotate(300 12 12)"><ellipse cx="12" cy="6.600" rx="5.900" ry="3.500" transform="rotate(-32 12 6.600)" fill="none" stroke="#dcdcdc" stroke-width="2.1"/></g></svg>
<svg class="j" style="left:967px;top:30px;" width="9.4" height="9" viewBox="0 0 9.4 9"><rect x=".6" y=".6" width="8.200" height="7.800" rx="1.100" fill="none" stroke="#c8c8c8" stroke-width="1"/><path d="M4.700 .6 V8.400" stroke="#c8c8c8" stroke-width="1"/></svg>
<svg class="j" style="left:984px;top:33.0px;" width="7" height="2" viewBox="0 0 7 2"><circle cx=".8" cy="1" r=".62" fill="#a8a8a8"/><circle cx="3.300" cy="1" r=".62" fill="#a8a8a8"/><circle cx="5.800" cy="1" r=".62" fill="#a8a8a8"/></svg>
<svg class="j" style="left:162.6px;top:46.21px" width="72.40" height="9.79"><text x="0" y="7.79" font-size="7.53" fill="#a9a9a9" font-family="&quot;Liberation Sans&quot;, &quot;Noto Sans CJK JP&quot;, sans-serif" textLength="71.4" lengthAdjust="spacingAndGlyphs">有給申請QAエージェント</text></svg>
<svg class="j" style="left:238.2px;top:48.400000000000006px;" width="3.8" height="5.6" viewBox="0 0 3.8 5.6"><path d="M.6 .5 L3 2.800 L.6 5.100" fill="none" stroke="#a0a0a0" stroke-width="1"/></svg>
<svg class="j" style="left:244.6px;top:47.3px;" width="8.6" height="8.6" viewBox="0 0 24 24"><path d="M12 1.800 L20.600 6.700 V17.300 L12 22.200 L3.400 17.300 V6.700z" fill="#a8a8a8" fill-opacity=".6" stroke="#a8a8a8" stroke-width="2.400" stroke-linejoin="round"/><path d="M10.300 8 L15 10.600 V14.200 L10.300 16.600z" fill="#1c1c1c" fill-opacity=".7"/><path d="M15.200 12.300 h3.200 M7 8.500 v7" stroke="#1c1c1c" stroke-opacity=".5" stroke-width="1.600"/></svg>
<span class="t s" style="left:256.4px;top:46px;height:12px;line-height:12px;font-size:7.53px;color:#a9a9a9;letter-spacing:-0.091px;">settings.mcs.yml</span>
<div style="left:992px;top:57px;width:8px;height:289.5px;background:#424242;"></div>
<div style="left:992px;top:160px;width:8px;height:2px;background:#767676;"></div>
<div style="left:952.4px;top:57.0px;width:30px;height:32px;filter:blur(.45px)"><div style="left:0.00px;top:0.00px;width:4.73px;height:.9px;background:#9cdcfe;opacity:0.4"></div><div style="left:4.73px;top:0.00px;width:0.43px;height:.9px;background:#d4d4d4;opacity:0.27"></div><div style="left:5.59px;top:0.00px;width:9.29px;height:.9px;background:#ce9178;opacity:0.27"></div><div style="left:0.00px;top:0.78px;width:4.30px;height:.9px;background:#9cdcfe;opacity:0.4"></div><div style="left:4.30px;top:0.78px;width:0.43px;height:.9px;background:#d4d4d4;opacity:0.27"></div><div style="left:5.16px;top:0.78px;width:9.03px;height:.9px;background:#d4d4d4;opacity:0.27"></div><div style="left:0.00px;top:1.55px;width:8.17px;height:.9px;background:#9cdcfe;opacity:0.4"></div><div style="left:8.17px;top:1.55px;width:0.43px;height:.9px;background:#d4d4d4;opacity:0.27"></div><div style="left:9.03px;top:1.55px;width:6.45px;height:.9px;background:#d4d4d4;opacity:0.27"></div><div style="left:0.00px;top:2.33px;width:7.74px;height:.9px;background:#9cdcfe;opacity:0.4"></div><div style="left:7.74px;top:2.33px;width:0.43px;height:.9px;background:#d4d4d4;opacity:0.27"></div><div style="left:8.60px;top:2.33px;width:4.30px;height:.9px;background:#d4d4d4;opacity:0.27"></div><div style="left:0.00px;top:3.10px;width:9.03px;height:.9px;background:#9cdcfe;opacity:0.4"></div><div style="left:9.03px;top:3.10px;width:0.43px;height:.9px;background:#d4d4d4;opacity:0.27"></div><div style="left:9.89px;top:3.10px;width:2.58px;height:.9px;background:#d4d4d4;opacity:0.27"></div><div style="left:0.00px;top:3.88px;width:5.59px;height:.9px;background:#9cdcfe;opacity:0.4"></div><div style="left:5.59px;top:3.88px;width:0.43px;height:.9px;background:#d4d4d4;opacity:0.27"></div><div style="left:0;top:4.65px;width:0.86px;height:.9px;background:#9cdcfe;opacity:.16"></div><div style="left:0.86px;top:4.65px;width:3.44px;height:.9px;background:#9cdcfe;opacity:0.4"></div><div style="left:4.30px;top:4.65px;width:0.43px;height:.9px;background:#d4d4d4;opacity:0.27"></div><div style="left:0;top:5.42px;width:1.72px;height:.9px;background:#9cdcfe;opacity:.16"></div><div style="left:1.72px;top:5.42px;width:5.59px;height:.9px;background:#9cdcfe;opacity:0.4"></div><div style="left:7.31px;top:5.42px;width:0.43px;height:.9px;background:#d4d4d4;opacity:0.27"></div><div style="left:0;top:6.20px;width:2.58px;height:.9px;background:#9cdcfe;opacity:.16"></div><div style="left:2.58px;top:6.20px;width:3.01px;height:.9px;background:#9cdcfe;opacity:0.4"></div><div style="left:5.59px;top:6.20px;width:0.43px;height:.9px;background:#d4d4d4;opacity:0.27"></div><div style="left:0;top:6.98px;width:3.44px;height:.9px;background:#9cdcfe;opacity:.16"></div><div style="left:3.44px;top:6.98px;width:5.16px;height:.9px;background:#9cdcfe;opacity:0.4"></div><div style="left:8.60px;top:6.98px;width:0.43px;height:.9px;background:#d4d4d4;opacity:0.27"></div><div style="left:0;top:7.75px;width:4.30px;height:.9px;background:#9cdcfe;opacity:.16"></div><div style="left:4.30px;top:7.75px;width:2.15px;height:.9px;background:#9cdcfe;opacity:0.4"></div><div style="left:6.45px;top:7.75px;width:0.43px;height:.9px;background:#d4d4d4;opacity:0.27"></div><div style="left:7.31px;top:7.75px;width:6.45px;height:.9px;background:#ce9178;opacity:0.27"></div><div style="left:0;top:8.53px;width:4.30px;height:.9px;background:#9cdcfe;opacity:.16"></div><div style="left:4.30px;top:8.53px;width:4.73px;height:.9px;background:#9cdcfe;opacity:0.4"></div><div style="left:9.03px;top:8.53px;width:0.43px;height:.9px;background:#d4d4d4;opacity:0.27"></div><div style="left:0;top:9.30px;width:4.30px;height:.9px;background:#9cdcfe;opacity:.16"></div><div style="left:4.30px;top:9.30px;width:4.73px;height:.9px;background:#9cdcfe;opacity:0.4"></div><div style="left:9.03px;top:9.30px;width:0.43px;height:.9px;background:#d4d4d4;opacity:0.27"></div><div style="left:9.89px;top:9.30px;width:1.72px;height:.9px;background:#c586c0;opacity:0.27"></div><div style="left:0;top:10.85px;width:3.44px;height:.9px;background:#9cdcfe;opacity:.16"></div><div style="left:3.44px;top:10.85px;width:8.60px;height:.9px;background:#9cdcfe;opacity:0.4"></div><div style="left:12.04px;top:10.85px;width:0.43px;height:.9px;background:#d4d4d4;opacity:0.27"></div><div style="left:0;top:11.62px;width:3.44px;height:.9px;background:#9cdcfe;opacity:.16"></div><div style="left:3.44px;top:11.62px;width:4.73px;height:.9px;background:#9cdcfe;opacity:0.4"></div><div style="left:8.17px;top:11.62px;width:0.43px;height:.9px;background:#d4d4d4;opacity:0.27"></div><div style="left:0;top:12.40px;width:3.44px;height:.9px;background:#9cdcfe;opacity:.16"></div><div style="left:3.44px;top:12.40px;width:4.73px;height:.9px;background:#9cdcfe;opacity:0.4"></div><div style="left:8.17px;top:12.40px;width:0.43px;height:.9px;background:#d4d4d4;opacity:0.27"></div><div style="left:9.03px;top:12.40px;width:4.64px;height:.9px;background:#ce9178;opacity:0.27"></div><div style="left:14.10px;top:12.40px;width:0.43px;height:.9px;background:#ce9178;opacity:0.27"></div><div style="left:0;top:13.18px;width:3.44px;height:.9px;background:#9cdcfe;opacity:.16"></div><div style="left:3.44px;top:13.18px;width:5.16px;height:.9px;background:#9cdcfe;opacity:0.4"></div><div style="left:8.60px;top:13.18px;width:0.43px;height:.9px;background:#d4d4d4;opacity:0.27"></div><div style="left:0;top:14.72px;width:2.58px;height:.9px;background:#9cdcfe;opacity:.16"></div><div style="left:2.58px;top:14.72px;width:1.72px;height:.9px;background:#9cdcfe;opacity:0.4"></div><div style="left:4.30px;top:14.72px;width:0.43px;height:.9px;background:#d4d4d4;opacity:0.27"></div><div style="left:0;top:15.50px;width:3.44px;height:.9px;background:#9cdcfe;opacity:.16"></div><div style="left:3.44px;top:15.50px;width:4.30px;height:.9px;background:#9cdcfe;opacity:0.4"></div><div style="left:7.74px;top:15.50px;width:0.43px;height:.9px;background:#d4d4d4;opacity:0.27"></div><div style="left:0;top:17.05px;width:1.72px;height:.9px;background:#9cdcfe;opacity:.16"></div><div style="left:1.72px;top:17.05px;width:10.32px;height:.9px;background:#9cdcfe;opacity:0.4"></div><div style="left:12.04px;top:17.05px;width:0.43px;height:.9px;background:#d4d4d4;opacity:0.27"></div><div style="left:12.90px;top:17.05px;width:1.72px;height:.9px;background:#c586c0;opacity:0.27"></div><div style="left:0;top:18.60px;width:0.86px;height:.9px;background:#9cdcfe;opacity:.16"></div><div style="left:0.86px;top:18.60px;width:7.74px;height:.9px;background:#9cdcfe;opacity:0.4"></div><div style="left:8.60px;top:18.60px;width:0.43px;height:.9px;background:#d4d4d4;opacity:0.27"></div><div style="left:9.46px;top:18.60px;width:1.72px;height:.9px;background:#c586c0;opacity:0.27"></div><div style="left:0;top:19.38px;width:0.86px;height:.9px;background:#9cdcfe;opacity:.16"></div><div style="left:0.86px;top:19.38px;width:4.73px;height:.9px;background:#9cdcfe;opacity:0.4"></div><div style="left:5.59px;top:19.38px;width:0.43px;height:.9px;background:#d4d4d4;opacity:0.27"></div><div style="left:0;top:20.15px;width:1.72px;height:.9px;background:#9cdcfe;opacity:.16"></div><div style="left:1.72px;top:20.15px;width:7.31px;height:.9px;background:#9cdcfe;opacity:0.4"></div><div style="left:9.03px;top:20.15px;width:0.43px;height:.9px;background:#d4d4d4;opacity:0.27"></div><div style="left:9.89px;top:20.15px;width:10.75px;height:.9px;background:#4ec9b0;opacity:0.27"></div><div style="left:20.64px;top:20.15px;width:3.44px;height:.9px;background:#d4d4d4;opacity:0.27"></div><div style="left:0;top:21.70px;width:0.86px;height:.9px;background:#9cdcfe;opacity:.16"></div><div style="left:0.86px;top:21.70px;width:4.30px;height:.9px;background:#9cdcfe;opacity:0.4"></div><div style="left:5.16px;top:21.70px;width:0.43px;height:.9px;background:#d4d4d4;opacity:0.27"></div><div style="left:0;top:22.48px;width:1.72px;height:.9px;background:#9cdcfe;opacity:.16"></div><div style="left:1.72px;top:22.48px;width:7.31px;height:.9px;background:#9cdcfe;opacity:0.4"></div><div style="left:9.03px;top:22.48px;width:0.43px;height:.9px;background:#d4d4d4;opacity:0.27"></div><div style="left:9.89px;top:22.48px;width:1.72px;height:.9px;background:#c586c0;opacity:0.27"></div><div style="left:0;top:23.25px;width:1.72px;height:.9px;background:#9cdcfe;opacity:.16"></div><div style="left:1.72px;top:23.25px;width:9.03px;height:.9px;background:#9cdcfe;opacity:0.4"></div><div style="left:10.75px;top:23.25px;width:0.43px;height:.9px;background:#d4d4d4;opacity:0.27"></div><div style="left:11.61px;top:23.25px;width:1.72px;height:.9px;background:#c586c0;opacity:0.27"></div><div style="left:0;top:24.03px;width:1.72px;height:.9px;background:#9cdcfe;opacity:.16"></div><div style="left:1.72px;top:24.03px;width:9.89px;height:.9px;background:#9cdcfe;opacity:0.4"></div><div style="left:11.61px;top:24.03px;width:0.43px;height:.9px;background:#d4d4d4;opacity:0.27"></div><div style="left:12.47px;top:24.03px;width:1.72px;height:.9px;background:#c586c0;opacity:0.27"></div><div style="left:0;top:24.80px;width:1.72px;height:.9px;background:#9cdcfe;opacity:.16"></div><div style="left:1.72px;top:24.80px;width:8.60px;height:.9px;background:#9cdcfe;opacity:0.4"></div><div style="left:10.32px;top:24.80px;width:0.43px;height:.9px;background:#d4d4d4;opacity:0.27"></div><div style="left:11.18px;top:24.80px;width:2.15px;height:.9px;background:#c586c0;opacity:0.27"></div><div style="left:0;top:26.35px;width:0.86px;height:.9px;background:#9cdcfe;opacity:.16"></div><div style="left:0.86px;top:26.35px;width:4.30px;height:.9px;background:#9cdcfe;opacity:0.4"></div><div style="left:5.16px;top:26.35px;width:0.43px;height:.9px;background:#d4d4d4;opacity:0.27"></div><div style="left:0;top:27.12px;width:1.72px;height:.9px;background:#9cdcfe;opacity:.16"></div><div style="left:1.72px;top:27.12px;width:1.72px;height:.9px;background:#9cdcfe;opacity:0.4"></div><div style="left:3.44px;top:27.12px;width:0.43px;height:.9px;background:#d4d4d4;opacity:0.27"></div><div style="left:4.30px;top:27.12px;width:9.46px;height:.9px;background:#d4d4d4;opacity:0.27"></div><div style="left:0.00px;top:28.68px;width:3.44px;height:.9px;background:#9cdcfe;opacity:0.4"></div><div style="left:3.44px;top:28.68px;width:0.43px;height:.9px;background:#d4d4d4;opacity:0.27"></div><div style="left:4.30px;top:28.68px;width:5.59px;height:.9px;background:#ce9178;opacity:0.27"></div><div style="left:0.00px;top:29.45px;width:3.44px;height:.9px;background:#9cdcfe;opacity:0.4"></div><div style="left:3.44px;top:29.45px;width:0.43px;height:.9px;background:#d4d4d4;opacity:0.27"></div><div style="left:4.30px;top:29.45px;width:1.72px;height:.9px;background:#b5cea8;opacity:0.27"></div></div>
<svg class="j" style="left:5.6px;top:581px;" width="7.2" height="8.4" viewBox="0 0 7.2 8.4"><path d="M.6 3 L3.500 5.500 L.6 8 M6.700 .5 L3.800 3 L6.700 5.500" fill="none" stroke="#c6c6c6" stroke-width="1.050"/></svg>
<svg class="j" style="left:23.6px;top:581.2px;" width="8.6" height="8.6" viewBox="0 0 8.6 8.600"><circle cx="4.300" cy="4.300" r="3.800" fill="none" stroke="#c4c4c4" stroke-width=".85"/><path d="M2.700 2.700 L5.900 5.900 M5.900 2.700 L2.700 5.900" stroke="#c4c4c4" stroke-width="1.150"/></svg>
<span class="t s" style="left:34.6px;top:580px;height:12px;line-height:12px;font-size:6.95px;color:#cccccc;">0</span>
<svg class="j" style="left:40.6px;top:581.2px;" width="9" height="8.4" viewBox="0 0 9 8.400"><path d="M4.500 .8 L8.400 7.700 H.6z" fill="none" stroke="#c4c4c4" stroke-width=".85" stroke-linejoin="round"/><path d="M4.500 3.200 V5.400 M4.500 6.100 V6.900" stroke="#c4c4c4" stroke-width=".8"/></svg>
<span class="t s" style="left:51px;top:580px;height:12px;line-height:12px;font-size:6.95px;color:#cccccc;">0</span>
<div style="left:644.2px;top:578.6px;width:18.6px;height:13.4px;background:#303030;"></div>
<svg class="j" style="left:649.4px;top:581.2px;" width="8.4" height="8.4" viewBox="0 0 16 16"><circle cx="6.600" cy="6.600" r="5" fill="none" stroke="#ccc" stroke-width="1.500"/><path d="M10.200 10.200 L15 15 M4.200 6.600 h4.800" stroke="#ccc" stroke-width="1.500"/></svg>
<svg class="j" style="left:668.1px;top:580.78px" width="38.00" height="9.04"><text x="0" y="7.19" font-size="6.95" fill="#cccccc" font-family="&quot;Liberation Sans&quot;, &quot;Noto Sans CJK JP&quot;, sans-serif" textLength="37" lengthAdjust="spacingAndGlyphs">行 18、列 22</text></svg>
<svg class="j" style="left:714.5px;top:580.78px" width="28.70" height="9.04"><text x="0" y="7.19" font-size="6.95" fill="#cccccc" font-family="&quot;Liberation Sans&quot;, &quot;Noto Sans CJK JP&quot;, sans-serif" textLength="27.7" lengthAdjust="spacingAndGlyphs">スペース: 2</text></svg>
<span class="t s" style="left:751.7px;top:580px;height:12px;line-height:12px;font-size:6.95px;color:#cccccc;letter-spacing:-0.110px;">UTF-8 with BOM</span>
<span class="t s" style="left:811.4px;top:580px;height:12px;line-height:12px;font-size:6.95px;color:#cccccc;letter-spacing:-0.837px;">CRLF</span>
<span class="t s" style="left:836.4px;top:580px;height:12px;line-height:12px;font-size:6.95px;color:#cccccc;letter-spacing:0.476px;">{ }</span>
<span class="t s" style="left:849px;top:580px;height:12px;line-height:12px;font-size:6.95px;color:#cccccc;letter-spacing:0.029px;">Microsoft Copilot Studio</span>
<div style="left:928.2px;top:578.6px;width:53.8px;height:13.4px;background:#343434;"></div>
<svg class="j" style="left:932.2px;top:580.9px;" width="9.6" height="8.9" viewBox="0 0 19 18"><rect x="1.300" y="1.300" width="6.800" height="6.800" rx="2.200" fill="none" stroke="#d0d0d0" stroke-width="2.200"/><rect x="10.300" y="1.300" width="6.800" height="6.800" rx="2.200" fill="none" stroke="#d0d0d0" stroke-width="2.200"/><rect x="1.300" y="10.300" width="6.800" height="6.300" rx="2.200" fill="none" stroke="#d0d0d0" stroke-width="2.200"/><circle cx="14" cy="13.600" r="4.600" fill="#d0d0d0"/><path d="M12.300 11.900 l3.400 3.400 m0 -3.400 l-3.400 3.400" stroke="#343434" stroke-width="1.300"/></svg>
<span class="t s" style="left:944px;top:580px;height:12px;line-height:12px;font-size:6.95px;color:#cccccc;letter-spacing:-0.033px;">Signed out</span>
<svg class="j" style="left:987.4px;top:581px;" width="8.4" height="8.8" viewBox="0 0 8.4 8.800"><path d="M1 6.600 c1 -1 .9 -2 .9 -3.300 c0 -1.600 1 -2.500 2.100 -2.500 s2.100 .9 2.100 2.500 c0 1.300 -.1 2.300 .9 3.300z M3.200 7.400 c.2 .7 1.400 .7 1.600 0" fill="none" stroke="#ccc" stroke-width="1.050"/><circle cx="6.200" cy="1.800" r="1.600" fill="#e4e4e4"/></svg>
<div style="left:0;top:0;width:998px;height:590px;border:1px solid #383838;border-top-color:#444;border-radius:5px;pointer-events:none"></div>
</div>
</body></html>
